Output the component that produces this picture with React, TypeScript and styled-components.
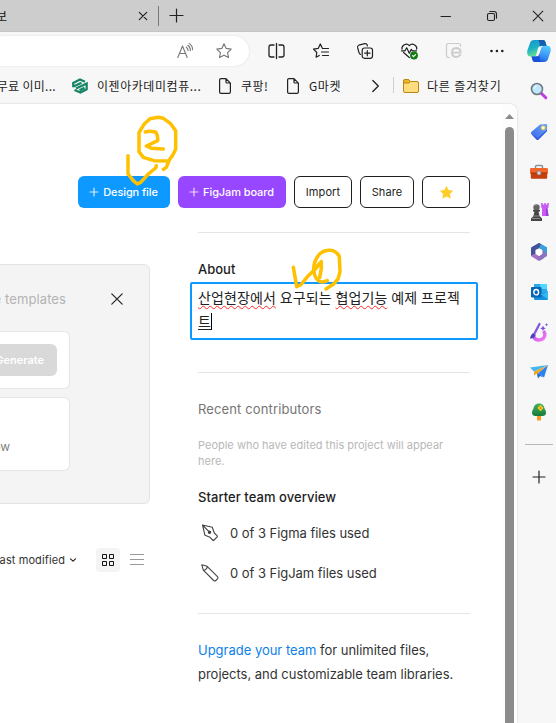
import React from "react";
import styled, { createGlobalStyle } from "styled-components";

const GlobalStyle = createGlobalStyle`
  * { box-sizing: border-box; }
  body { margin: 0; background: #fff; font-family: Inter, "Noto Sans CJK KR", sans-serif; color: #333; }
  p, h3 { margin: 0; font-weight: 400; }
  button { font-family: inherit; margin: 0; padding: 0; border: 0; background: none; }
  svg { display: block; flex: none; overflow: visible; }
`;

const Window = styled.div`
  position: relative;
  width: 556px;
  height: 723px;
  overflow: hidden;
  display: flex;
  flex-direction: column;
  background: #f7f7f7;
`;

const TitleBar = styled.header`
  flex: none;
  height: 32px;
  display: flex;
  align-items: center;
  background: #cdcdcd;
  border-bottom: 1px solid #c6c6c6;
`;

const Spacer = styled.div<{ $w?: number }>`
  flex: ${(p) => (p.$w === undefined ? "1" : `0 0 ${p.$w}px`)};
`;

const TabTitle = styled.span`
  width: 7px;
  display: flex;
  justify-content: flex-end;
  font: 12px "Noto Sans CJK KR", sans-serif;
  color: #111;
`;

const TabDivider = styled.span`
  width: 1px;
  height: 20px;
  background: #777;
`;

const Below = styled.div`
  flex: 1;
  display: flex;
  min-height: 0;
`;

const Main = styled.div`
  width: 517px;
  display: flex;
  flex-direction: column;
`;

const Toolbar = styled.div`
  flex: none;
  height: 38px;
  display: flex;
  align-items: center;
`;

const AddressBar = styled.div`
  width: 249px;
  height: 30px;
  border-radius: 0 15px 15px 0;
  background: #fff;
  box-shadow: 0 0 2px rgba(0, 0, 0, 0.12);
  display: flex;
  align-items: center;
  justify-content: flex-end;
  gap: 23px;
  padding-right: 17px;
`;

const Tools = styled.div`
  flex: 1;
  display: flex;
  align-items: center;
  justify-content: space-between;
  padding: 0 13px 0 19px;
`;

const Bookmarks = styled.nav`
  flex: none;
  height: 34px;
  padding-bottom: 3px;
  display: flex;
  align-items: center;
  font: 12px "Noto Sans CJK KR", sans-serif;
  color: #1b1b1b;
  white-space: nowrap;
`;

const BookmarkText = styled.span<{ $w: number; $end?: boolean; $ls?: number }>`
  width: ${(p) => p.$w}px;
  display: flex;
  justify-content: ${(p) => (p.$end ? "flex-end" : "flex-start")};
  letter-spacing: ${(p) => p.$ls ?? 0}px;
`;

const BookmarkDivider = styled.span`
  width: 1px;
  height: 16px;
  margin-top: -2px;
  background: #cfcfcf;
`;

const Page = styled.main`
  flex: 1;
  display: flex;
  background: #fff;
  border-radius: 0 8px 0 0;
  box-shadow: 0 0 2px rgba(0, 0, 0, 0.22);
`;

const Content = styled.div`
  width: 502px;
  display: flex;
  flex-direction: column;
`;

const Actions = styled.div`
  height: 32px;
  margin: 72px 32px 0 78px;
  display: flex;
  gap: 8px;
`;

const ActionButton = styled.button<{ $w: number; $bg?: string }>`
  width: ${(p) => p.$w}px;
  height: 32px;
  border-radius: 6px;
  display: flex;
  align-items: center;
  justify-content: center;
  gap: 5px;
  font-size: 11px;
  font-weight: ${(p) => (p.$bg ? 500 : 400)};
  letter-spacing: ${(p) => (p.$bg ? -0.1 : 0.1)}px;
  white-space: nowrap;
  color: ${(p) => (p.$bg ? "#fff" : "#222")};
  background: ${(p) => p.$bg ?? "#fff"};
  border: ${(p) => (p.$bg ? "0" : "1px solid #1e1e1e")};
`;

const Columns = styled.div`
  display: flex;
  gap: 40px;
`;

const FilesColumn = styled.section`
  width: 150px;
  padding-top: 56px;
`;

const TemplatePanel = styled.div`
  height: 240px;
  border: 1px solid #e3e3e3;
  border-left: 0;
  border-radius: 0 6px 6px 0;
  background: #f4f4f4;
  display: flex;
  flex-direction: column;
  gap: 8px;
`;

const PanelHead = styled.div`
  height: 58px;
  padding: 10px 26px 0 0;
  display: flex;
  align-items: center;
  justify-content: space-between;
`;

const PanelTitle = styled.span`
  width: 66px;
  display: flex;
  justify-content: flex-end;
  white-space: nowrap;
  font-size: 13px;
  letter-spacing: 0.1px;
  color: #b3b3b3;
`;

const Card = styled.div<{ $h: number }>`
  width: 70px;
  height: ${(p) => p.$h}px;
  border: 1px solid #e5e5e5;
  border-left: 0;
  border-radius: 0 6px 6px 0;
  background: #fff;
  display: flex;
`;

const Generate = styled.button`
  width: 57px;
  height: 32px;
  margin-top: 12px;
  padding-right: 13px;
  border-radius: 0 6px 6px 0;
  background: #d9d9d9;
  color: #fff;
  display: flex;
  align-items: center;
  justify-content: flex-end;
  font-size: 11px;
  font-weight: 600;
`;

const CardCaption = styled.span`
  width: 10px;
  margin-top: 40px;
  display: flex;
  justify-content: flex-end;
  font-size: 12px;
  line-height: 18px;
  color: #808080;
`;

const SortBar = styled.div`
  height: 24px;
  margin-top: 44px;
  display: flex;
  align-items: center;
`;

const SortLabel = styled.span`
  width: 65px;
  display: flex;
  justify-content: flex-end;
  white-space: nowrap;
  font-size: 11px;
  letter-spacing: 0.1px;
`;

const GridToggle = styled.button`
  width: 24px;
  height: 24px;
  border-radius: 4px;
  background: #f4f4f4;
  display: grid;
  place-items: center;
`;

const Details = styled.aside`
  width: 288px;
  padding: 24px 8px 0;
`;

const Rule = styled.div`
  height: 1px;
  background: #e5e5e5;
`;

const Heading = styled.h3<{ $top: number; $muted?: boolean; $ls?: number }>`
  margin-top: ${(p) => p.$top}px;
  font-size: 13px;
  line-height: 20px;
  letter-spacing: ${(p) => p.$ls ?? 0}px;
  font-weight: ${(p) => (p.$muted ? 400 : 500)};
  color: ${(p) => (p.$muted ? "#757575" : "#1e1e1e")};
`;

const Description = styled.div`
  height: 58px;
  margin: 3px -8px 32px;
  padding: 1px 6px;
  border: 2px solid #0d99ff;
  border-radius: 2px;
  font: 14px/24px "Noto Sans CJK KR", sans-serif;
  letter-spacing: 0.1px;
  word-spacing: 0.6px;
  color: #222;
  white-space: nowrap;
`;

const Misspelled = styled.span`
  text-decoration: underline wavy #ff2a2a 1.3px;
  text-underline-offset: 2px;
  text-decoration-skip-ink: none;
`;

const Composing = styled.span`
  display: inline-block;
  height: 18px;
  line-height: 18px;
  border-bottom: 1px solid #222;
`;

const Caret = styled.span`
  display: inline-block;
  width: 1px;
  height: 17px;
  background: #000;
  vertical-align: -3px;
`;

const Hint = styled.p`
  margin-top: 18px;
  font-size: 11px;
  line-height: 16px;
  color: #b8b8b8;
`;

const Usage = styled.div<{ $top: number }>`
  height: 24px;
  margin-top: ${(p) => p.$top}px;
  padding-left: 3px;
  display: flex;
  align-items: center;
  gap: 11px;
  font-size: 13px;
  letter-spacing: -0.04px;
  color: #333;
`;

const UpgradeBlock = styled.div`
  margin-top: 28px;
`;

const Upgrade = styled.p`
  margin-top: 24px;
  font-size: 13px;
  line-height: 24px;
  letter-spacing: -0.015px;
  white-space: nowrap;
`;

const Link = styled.a`
  color: #0d7fe8;
`;

const Scrollbar = styled.div`
  width: 15px;
  padding: 10px 3px 0;
  border-radius: 0 8px 0 0;
  background: #fdfdfd;
  display: flex;
  flex-direction: column;
  align-items: center;
  gap: 8px;
`;

const Thumb = styled.div`
  flex: 1;
  width: 9px;
  border-radius: 5px 5px 0 0;
  background: #8b8b8b;
`;

const Sidebar = styled.aside`
  width: 39px;
  padding-left: 5px;
  display: flex;
  flex-direction: column;
`;

const SideSlot = styled.div<{ $lift?: number }>`
  height: 40px;
  padding-bottom: ${(p) => p.$lift ?? 0}px;
  display: grid;
  place-items: center;
`;

const SideRule = styled.div`
  width: 28px;
  height: 1px;
  margin: 12px 0 12px 3px;
  background: #b9b9b9;
`;

const Notes = styled.svg`
  position: absolute;
  left: 0;
  top: 0;
  pointer-events: none;
`;

type LineProps = { w?: number; h?: number; sw?: number; c?: string; children: React.ReactNode };
const Line = ({ w = 16, h = 16, sw = 1.1, c = "#222", children }: LineProps) => (
  <svg width={w} height={h} viewBox={`0 0 ${w} ${h}`} fill="none" stroke={c} strokeWidth={sw} strokeLinecap="round" strokeLinejoin="round">
    {children}
  </svg>
);

const STAR = "M8 .8l2.2 4.6 5 .7-3.6 3.5.9 5L8 12.2l-4.5 2.4.9-5L.8 6.1l5-.7z";

const FileIcon = () => (
  <Line w={12} h={16} sw={1.2}>
    <path d="M2 .6h5l4.4 4.5V14a1.4 1.4 0 0 1-1.4 1.4H2A1.4 1.4 0 0 1 .6 14V2A1.4 1.4 0 0 1 2 .6zM7 .8V4a1 1 0 0 0 1 1h3.2" />
  </Line>
);

const Plus = ({ s, c = "#222", sw = 1.2 }: { s: number; c?: string; sw?: number }) => (
  <Line w={s} h={s} c={c} sw={sw}>
    <path d={`M${s / 2} 0V${s}M0 ${s / 2}H${s}`} />
  </Line>
);

const Gradients = () => (
  <defs>
    <linearGradient id="copilotA" x1="0" y1="0" x2="0.4" y2="1">
      <stop offset="0" stopColor="#168fd0" />
      <stop offset=".55" stopColor="#1cb4c4" />
      <stop offset="1" stopColor="#74e28b" />
    </linearGradient>
    <linearGradient id="copilotB" x1="0.6" y1="0" x2="0.3" y2="1">
      <stop offset="0" stopColor="#56c8ff" />
      <stop offset=".6" stopColor="#3890f4" />
      <stop offset="1" stopColor="#1556d8" />
    </linearGradient>
    <linearGradient id="tag" x1="1" y1="0" x2="0" y2="1">
      <stop offset="0" stopColor="#69a8ff" />
      <stop offset="1" stopColor="#3d62e8" />
    </linearGradient>
    <linearGradient id="brush" x1="0" y1="0" x2="1" y2="1">
      <stop offset="0" stopColor="#7852dd" />
      <stop offset=".5" stopColor="#d766ee" />
      <stop offset="1" stopColor="#f47af3" />
    </linearGradient>
    <linearGradient id="tree" x1="0" y1="0" x2="0" y2="1">
      <stop offset="0" stopColor="#45b55b" />
      <stop offset="1" stopColor="#157a3c" />
    </linearGradient>
  </defs>
);

const Copilot = () => (
  <svg width="24" height="24" viewBox="0 0 24 24">
    <Gradients />
    <path d="M7 1h9c2 0 2.500 2 3 4l.7 2h-5c-2 0-2.800 1-3.300 3l-1.300 5c-.4 1.500-1.500 2.500-3 2.500H3.500C.3 17.500-.3 14.500.5 11L3 4c.7-2 2-3 4-3z" fill="url(#copilotA)" />
    <path d="M17 23H8c-2 0-2.500-2-3-4l-.5-1.500H9c2 0 3-1 3.500-3l1.500-5c.5-1.700 1.500-2.800 3.500-2.800h3c3 0 3.800 3 3 6L21 20c-.7 2-2 3-4 3z" fill="url(#copilotB)" />
    <path d="M11 1h5c2 0 2.500 2 3 4l.7 1.800h-4c-2 0-2.700.6-3.200 1.700C13 5.500 13 2.500 11 1z" fill="#175cae" />
    <path d="M4.500 17.500H9c2 0 3-1 3.500-3-.3 3.500 0 6.500 1.500 8.500H8c-2 0-2.700-2-3.500-5.500z" fill="#1752d7" />
    <path d="M14.200 8.300c-.4.600-.7 1.300-.9 2l-1.600 5.500c-.3.800-.7 1.300-1.200 1.600L9.300 15.500 10.800 10c.4-1.300.9-2.200 1.800-2.700z" fill="#f7f7f7" />
  </svg>
);

const Search = () => (
  <svg width="18" height="18" viewBox="0 0 18 18">
    <path d="M11 11l4.800 4.800" stroke="#c13bea" strokeWidth="3" strokeLinecap="round" />
    <circle cx="7" cy="7" r="5.500" fill="#bfe7fc" stroke="#707880" strokeWidth="1.600" />
    <path d="M4 7a3.200 3.200 0 0 1 3-3" stroke="#fff" fill="none" />
  </svg>
);

const Tag = () => (
  <svg width="18" height="18" viewBox="0 0 18 18">
    <path d="M10 1.500L16 1q1.300 0 1.200 1.300L17 8 8.500 16.500q-1 .9-2 0L1.300 11q-.8-1 0-2z" fill="url(#tag)" />
    <path d="M1.300 11l5.200 5.500q1 .9 2 0L17 8V6.800L8 15z" fill="#3559d8" />
    <circle cx="13.200" cy="4.800" r="1.800" fill="#fff" stroke="#ffd43b" strokeWidth="1.200" />
  </svg>
);

const Toolbox = () => (
  <svg width="18" height="16" viewBox="0 0 18 16">
    <path d="M5.500 5V2.500q0-1 1-1h5q1 0 1 1V5" fill="none" stroke="#8a9297" strokeWidth="1.500" />
    <rect x="0" y="4" width="18" height="6" rx="1.200" fill="#f0662b" />
    <path d="M.8 9h16.400v4.800q0 1-1 1H1.800q-1 0-1-1z" fill="#c4400f" />
    <path d="M.8 9h16.400" stroke="#a5330c" />
    <circle cx="9" cy="9" r="2" fill="#d3dadd" stroke="#7a7f82" strokeWidth=".6" />
  </svg>
);

const Chess = () => (
  <svg width="19" height="18" viewBox="0 0 19 18">
    <path d="M11 0h1.700v1.500h1.500V0h1.600v1.500h1.500V0H19l-.5 4.500-1 .8L18.500 13H12V5.300l-.8-.8z" fill="#c95bf4" />
    <path d="M16 5.500h1.500l1 7.500H16z" fill="#9a3fd0" />
    <circle cx="6.500" cy="4.500" r="3.200" fill="#646464" />
    <path d="M3 7h7v1.500H8.500l1 4.500 2.500 2.500V18H1v-2.500L3.500 13l1-4.500H3z" fill="#454545" />
    <path d="M5 2.700q1-1 2-.4M3 13h6M2 15.500h8" stroke="#8b8b8b" fill="none" />
  </svg>
);

const Office = () => (
  <svg width="16" height="18" viewBox="0 0 16 18">
    <path d="M8 0L16 4.500V13l-4.500-2.500V7L5 3.500 0 7V4.500z" fill="#5b9de0" />
    <path d="M8 0L1 4Q0 4.500 0 6v7l4.500-2V7L10 4.500V1z" fill="#435398" />
    <path d="M4.500 11L0 13l7 4.500q1 .6 2 0l4-2.500-5-2z" fill="#a56ec4" />
    <path d="M16 8v5l-7 4.500L6 15l5.500-4.500V7z" fill="#8c75bd" />
    <path d="M10 1l6 3.500V11l-4.500-4.200L8 5z" fill="#3aa0dc" />
    <path d="M8 5.500l3.200 1.800v3.500L8 12.700l-3.200-1.900V7.300z" fill="#fff" />
  </svg>
);

const Outlook = () => (
  <svg width="17" height="16" viewBox="0 0 17 16">
    <path d="M3 0h12q1 0 1 1v9H3z" fill="#28a8ea" />
    <path d="M9 0h7v5H9z" fill="#50d9ff" />
    <path d="M3 8l7 3 7-4v8q0 1-1 1H4q-1 0-1-1z" fill="#1490df" />
    <path d="M17 7l-6 4 6 4.500z" fill="#35b8f1" />
    <rect y="3" width="10.500" height="10.500" rx="1" fill="#0664b5" />
    <ellipse cx="5.200" cy="8.200" rx="2.400" ry="2.700" fill="none" stroke="#fff" strokeWidth="1.400" />
  </svg>
);

const Brush = () => (
  <svg width="18" height="19" viewBox="0 0 18 19">
    <path d="M3.500 13Q4.500 17 9 17T14.800 12.500Q15.200 10 13.500 8" fill="none" stroke="url(#brush)" strokeWidth="3.400" />
    <path d="M9.500 1L4.800 10" stroke="#8657dd" strokeWidth="2.300" strokeLinecap="round" />
    <path d="M3.500 10Q.8 11 0 15.500 4 16 5.800 12z" fill="#5140b8" />
    <path d="M13 2.500l.9 1.900 1.900.9-1.900.9-.9 1.900-.9-1.900-1.900-.9 1.900-.9zM16.500 0l.5 1.200 1.200.5-1.200.5-.5 1.200-.5-1.200-1.200-.5L16 1.200z" fill="#7650df" />
  </svg>
);

const Plane = () => (
  <svg width="18" height="14" viewBox="0 0 18 14">
    <path d="M18 0L14 12.500 8 8z" fill="#2c83ef" />
    <path d="M18 0L4 6.500v4L8 8z" fill="#f7a51d" />
    <path d="M8 8l5.500 4.500L10 11l-2 2.500L7 9z" fill="#1b63cf" />
    <path d="M0 2.500l4 4L18 0z" fill="#46b6ee" />
  </svg>
);

const Tree = () => (
  <svg width="14" height="18" viewBox="0 0 14 18">
    <rect x="5" y="12" width="4" height="5.500" rx=".8" fill="#f59b1d" />
    <path d="M7 .5C3 .5 2 3 1.300 6 .3 7.500 0 8.500 0 9.800 0 12 1.500 13 3.500 13h7c2 0 3.500-1 3.500-3.200 0-1.300-.3-2.300-1.300-3.800C12 3 11 .5 7 .5z" fill="url(#tree)" />
    <g fill="#ffc928">
      <circle cx="8.500" cy="3.700" r="1.400" /><circle cx="8.500" cy="6.500" r="1.400" /><circle cx="7.100" cy="5.100" r="1.400" /><circle cx="9.900" cy="5.100" r="1.400" />
    </g>
    <circle cx="8.500" cy="5.100" r=".8" fill="#b86810" />
  </svg>
);

const sideIcons = [Search, Tag, Toolbox, Chess, Office, Outlook, Brush, Plane, Tree];

const TitleRow = () => (
  <TitleBar>
    <TabTitle>보</TabTitle>
    <Spacer $w={132} />
    <Line w={8} h={8} sw={1.2}><path d="M.3 .3l7.400 7.400M7.700 .3L.3 7.700" /></Line>
    <Spacer $w={11} />
    <TabDivider />
    <Spacer $w={11} />
    <Plus s={13} />
    <Spacer />
    <Line w={10} h={10}><path d="M0 5.500h9.500" /></Line>
    <Spacer $w={36} />
    <Line w={10} h={10}>
      <rect x=".5" y="2.500" width="7" height="7" rx="1.500" />
      <path d="M2.800 .5H7a2.500 2.500 0 0 1 2.500 2.500v4.200" />
    </Line>
    <Spacer $w={36} />
    <Line w={10} h={10}><path d="M.2 .2l9.600 9.600M9.800 .2L.2 9.800" /></Line>
    <Spacer $w={13} />
  </TitleBar>
);

const ToolbarRow = () => (
  <Toolbar>
    <AddressBar>
      <Line w={16} h={14} c="#777">
        <path d="M.8 13.500L5.500 2l4.700 11.500M2.500 9.500h6M9.300 3.200q1.800 1.300 1.800 3.600M10.800 1.300q2.700 1.800 2.600 5.200M12.300 -.4q3.400 2.200 3.200 6" />
      </Line>
      <Line c="#777"><path d={STAR} /></Line>
    </AddressBar>
    <Tools>
      <Line w={17} h={16} sw={1.3}>
        <path d="M6 2H3Q1 2 1 4v8q0 2 2 2h3M8.500 .5v15M11 2h3q2 0 2 2v8q0 2-2 2h-3" />
      </Line>
      <Line sw={1.2}>
        <path d="M9.500 5.400L7.300 1 5.200 5.400l-4.700.8 3.300 3.300-.7 4.700 3.200-1.700M9.500 5.500h6M8.500 9h7M9.500 12.500h6" />
      </Line>
      <Line sw={1.2}>
        <rect x="5.200" y="5" width="10.300" height="10.300" rx="2.200" />
        <path d="M10.300 7.500v5.300M7.700 10.200H13M3.500 11.500Q2.300 11 2 9.700L.6 4.500Q.2 2.800 1.800 2.200L7.800.6Q9.500.2 10.100 1.800l.3 1.200" />
      </Line>
      <Line w={17} h={16} sw={1.2}>
        <path d="M1 6.200C.2 2.500 5.500-.8 8.300 2.700c2.800-3.500 8.200-.4 7.400 3.500M2.600 9.500l5.700 5M.5 7.800H4l1.700-3 2.600 5.500 2-4 1 1.500h4.200" />
        <circle cx="13" cy="12.500" r="3.300" fill="#107c10" stroke="#107c10" />
        <path d="M11.500 12.600l1 1 2-2" stroke="#fff" />
      </Line>
      <Line c="#ccc" sw={1.2}>
        <path d="M3.800 14.500H2.500q-2 0-2-2v-10q0-2 2-2h10q2 0 2 2v.8" />
        <path d="M14.300 11.800q-1.200 2.200-4.100 2.200-4.200-.3-4.200-4.600T10.300 5q4.400.2 4.300 4.600H6.500" strokeWidth="1.900" />
      </Line>
      <svg width="14" height="4" viewBox="0 0 14 4" fill="#222">
        <circle cx="1.500" cy="2" r="1.300" /><circle cx="6.900" cy="2" r="1.300" /><circle cx="12.300" cy="2" r="1.300" />
      </svg>
    </Tools>
  </Toolbar>
);

const BookmarkRow = () => (
  <Bookmarks>
    <BookmarkText $w={56} $end $ls={0.3}>무료 이미...</BookmarkText>
    <Spacer $w={16} />
    <svg width="16" height="16" viewBox="0 0 16 16" fill="none" stroke="#168565" strokeWidth="2.200">
      <path d="M1.200 9.300V5L8 1.500l5 2.300M1.500 8.600L9.500 4.800M4 10.600L14.700 5.600V11.300L8.500 14.500 2.500 12M7.500 12.300L12.500 9.700" />
    </svg>
    <Spacer $w={9} />
    <BookmarkText $w={122} $ls={0.55}>이젠아카데미컴퓨...</BookmarkText>
    <FileIcon />
    <Spacer $w={10} />
    <BookmarkText $w={46} $ls={0.4}>쿠팡!</BookmarkText>
    <FileIcon />
    <Spacer $w={10} />
    <BookmarkText $w={63} $ls={0.6}>G마켓</BookmarkText>
    <Line w={7} h={12} sw={1.3}><path d="M.8 .5L6.300 6 .8 11.500" /></Line>
    <Spacer $w={14} />
    <BookmarkDivider />
    <Spacer $w={9} />
    <svg width="16" height="14" viewBox="0 0 16 14" stroke="#b88615" strokeWidth="1">
      <path d="M.5 3V2Q.5.5 2 .5h3.500L7.500 2.500H14q1.500 0 1.500 1.500v8q0 1.500-1.500 1.500H2Q.5 13.500.5 12z" fill="#ffdc7c" />
      <path d="M.5 4V2Q.5.5 2 .5h3.500l2 2L6 4z" fill="#f0b429" />
    </svg>
    <Spacer $w={8} />
    <BookmarkText $w={80} $ls={0.8}>다른 즐겨찾기</BookmarkText>
  </Bookmarks>
);

const Files = () => (
  <FilesColumn>
    <TemplatePanel>
      <PanelHead>
        <PanelTitle>e templates</PanelTitle>
        <Line w={12} h={12} sw={1.2}><path d="M.8 .8l10.400 10.400M11.200 .8L.8 11.200" /></Line>
      </PanelHead>
      <Card $h={58}><Generate>Generate</Generate></Card>
      <Card $h={74}><CardCaption>ew</CardCaption></Card>
    </TemplatePanel>
    <SortBar>
      <SortLabel>Last modified</SortLabel>
      <Spacer $w={5} />
      <Line w={6} h={4}><path d="M.5 .8L3 3.200 5.500 .8" /></Line>
      <Spacer $w={20} />
      <GridToggle>
        <svg width="12" height="12" viewBox="0 0 12 12" fill="none" stroke="#111">
          <path d="M.5 .5h4v4h-4zM7.500 .5h4v4h-4zM.5 7.500h4v4h-4zM7.500 7.500h4v4h-4z" />
        </svg>
      </GridToggle>
      <Spacer $w={10} />
      <svg width="14" height="12" viewBox="0 0 14 12" stroke="#999"><path d="M0 .5h14M0 5.500h14M0 10.500h14" /></svg>
    </SortBar>
  </FilesColumn>
);

const DetailsPane = () => (
  <Details>
    <Rule />
    <Heading $top={26}>About</Heading>
    <Description>
      <Misspelled>산업현장에서</Misspelled> 요구되는 <Misspelled>협업기능</Misspelled> 예제 프로젝<br />
      <Composing>트</Composing><Caret />
    </Description>
    <Rule />
    <Heading $top={26} $muted $ls={0.13}>Recent contributors</Heading>
    <Hint>People who have edited this project will appear<br />here.</Hint>
    <Heading $top={18} $ls={0.05}>Starter team overview</Heading>
    <Usage $top={14}>
      <Line w={18} h={18} c="#444">
        <path d="M1.500 1l9.800 2.200 2 5.800 2.700 2.700q.7.700 0 1.400L13 16q-.7.700-1.400 0L9 13.300 4 11.300zM1.500 1l6.200 6.400" />
        <circle cx="8.500" cy="8.200" r="1.200" fill="#333" />
      </Line>
      0 of 3 Figma files used
    </Usage>
    <Usage $top={16}>
      <Line w={18} h={18} c="#444">
        <path d="M.8 .8l5.300 1.500L16.500 12.700q1 1 0 2.100l-1.700 1.700q-1 1-2.100 0L2.300 6.100zM6.200 2.400L5.900 4.200 4.200 5.900 2.400 6.200" />
      </Line>
      0 of 3 FigJam files used
    </Usage>
    <UpgradeBlock>
      <Rule />
      <Upgrade><Link>Upgrade your team</Link> for unlimited files,<br />projects, and customizable team libraries.</Upgrade>
    </UpgradeBlock>
  </Details>
);

const Annotations = () => (
  <Notes width="556" height="723" viewBox="0 0 556 723" fill="none" stroke="#ffc000" strokeWidth="10.500" strokeLinecap="round" strokeLinejoin="round">
    <g transform="translate(70 110) scale(.33333)">
      <path d="M265 22L240 26 222 43 207 68V125L220 142 252 152 295 153 308 136 317 118V62L301 40 280 25 265 22M298 150L289 172 280 178" />
      <path d="M226 66Q240 62 256 66Q264 74 263 92L229 108 245 115 280 117" />
      <path d="M174 137V192L190 212 202 222 212 217 235 192 257 174 259 167" />
    </g>
    <g transform="translate(180 235) scale(.33333)">
      <path d="M442 137Q425 145 414 136 402 125 401 100 402 76 418 58 432 45 450 46 468 47 478 64L480 110 474 132 460 148 438 162" />
      <path d="M412 92L424 80V100L419 128M340 97L345 125 350 155 362 150 385 122 407 101 424 80" />
    </g>
  </Notes>
);

export default function App() {
  return (
    <Window>
      <GlobalStyle />
      <TitleRow />
      <Below>
        <Main>
          <ToolbarRow />
          <BookmarkRow />
          <Page>
            <Content>
              <Actions>
                <ActionButton $w={92} $bg="#0d99ff"><Plus s={8} c="#d5edff" sw={1.2} />Design file</ActionButton>
                <ActionButton $w={108} $bg="#9747ff"><Plus s={8} c="#ead9ff" sw={1.2} />FigJam board</ActionButton>
                <ActionButton $w={58}>Import</ActionButton>
                <ActionButton $w={54}>Share</ActionButton>
                <ActionButton $w={48}>
                  <svg width="15" height="15" viewBox="0 0 16 16" fill="#ffcd29"><path d={STAR} /></svg>
                </ActionButton>
              </Actions>
              <Columns>
                <Files />
                <DetailsPane />
              </Columns>
            </Content>
            <Scrollbar>
              <svg width="9" height="5" viewBox="0 0 9 5" fill="#8b8b8b"><path d="M4.500 0L9 5H0z" /></svg>
              <Thumb />
            </Scrollbar>
          </Page>
        </Main>
        <Sidebar>
          <SideSlot $lift={2}><Copilot /></SideSlot>
          {sideIcons.map((Icon, i) => (
            <SideSlot key={i} $lift={i === 0 ? 2 : 0}><Icon /></SideSlot>
          ))}
          <SideRule />
          <SideSlot><Plus s={12} /></SideSlot>
        </Sidebar>
      </Below>
      <Annotations />
    </Window>
  );
}
